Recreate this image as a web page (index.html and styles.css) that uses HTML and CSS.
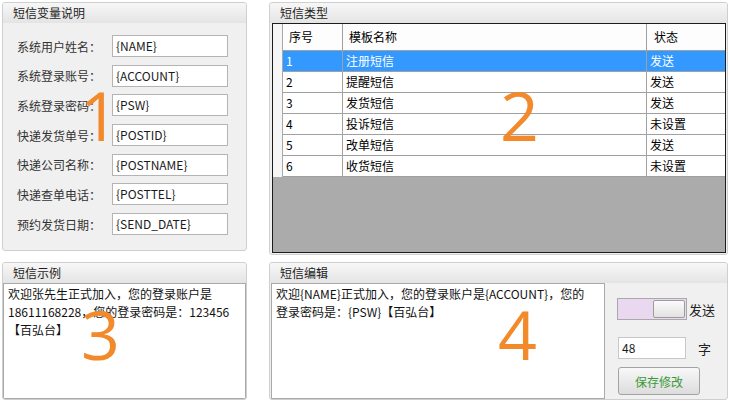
FILE: index.html
```html
<!DOCTYPE html>
<html lang="zh-CN">
<head>
<meta charset="utf-8">
<title>短信设置</title>
<link rel="stylesheet" href="styles.css">
</head>
<body>
<div class="page">
  <section class="panel vars">
    <header class="ph">短信变量说明</header>
    <div class="vars-body">
      <div class="vrow"><span class="vlabel">系统用户姓名：</span><span class="vinput">{NAME}</span></div>
      <div class="vrow"><span class="vlabel">系统登录账号：</span><span class="vinput">{ACCOUNT}</span></div>
      <div class="vrow"><span class="vlabel">系统登录密码：</span><span class="vinput">{PSW}</span></div>
      <div class="vrow"><span class="vlabel">快递发货单号：</span><span class="vinput">{POSTID}</span></div>
      <div class="vrow"><span class="vlabel">快递公司名称：</span><span class="vinput">{POSTNAME}</span></div>
      <div class="vrow"><span class="vlabel">快递查单电话：</span><span class="vinput">{POSTTEL}</span></div>
      <div class="vrow"><span class="vlabel">预约发货日期：</span><span class="vinput">{SEND_DATE}</span></div>
    </div>
  </section>

  <section class="panel types">
    <header class="ph">短信类型</header>
    <div class="grid">
      <div class="gr ghead"><span class="rh"></span><span class="gc">序号</span><span class="gc">模板名称</span><span class="gc">状态</span></div>
      <div class="gr sel"><span class="rh"></span><span class="gc">1</span><span class="gc">注册短信</span><span class="gc">发送</span></div>
      <div class="gr"><span class="rh"></span><span class="gc">2</span><span class="gc">提醒短信</span><span class="gc">发送</span></div>
      <div class="gr"><span class="rh"></span><span class="gc">3</span><span class="gc">发货短信</span><span class="gc">发送</span></div>
      <div class="gr"><span class="rh"></span><span class="gc">4</span><span class="gc">投诉短信</span><span class="gc">未设置</span></div>
      <div class="gr"><span class="rh"></span><span class="gc">5</span><span class="gc">改单短信</span><span class="gc">发送</span></div>
      <div class="gr"><span class="rh"></span><span class="gc">6</span><span class="gc">收货短信</span><span class="gc">未设置</span></div>
      <div class="gempty"></div>
    </div>
  </section>

  <section class="panel example">
    <header class="ph">短信示例</header>
    <div class="tbox ex-text">欢迎张先生正式加入，您的登录账户是<br>18611168228，您的登录密码是：123456<br>【百弘台】</div>
  </section>

  <section class="panel edit">
    <header class="ph">短信编辑</header>
    <div class="edit-body">
      <div class="tbox ed-text">欢迎{NAME}正式加入，您的登录账户是{ACCOUNT}，您的<br>登录密码是：{PSW}【百弘台】</div>
      <div class="side">
        <div class="srow"><span class="toggle"><span class="knob"></span></span><span class="slabel">发送</span></div>
        <div class="srow"><span class="count">48</span><span class="slabel unit">字</span></div>
        <button class="save" type="button">保存修改</button>
      </div>
    </div>
  </section>

  <span class="badge b1">1</span>
  <span class="badge b2">2</span>
  <span class="badge b3">3</span>
  <span class="badge b4">4</span>
</div>
</body>
</html>
```

FILE: styles.css
```css
* { box-sizing: border-box; }

html, body {
  margin: 0;
  padding: 0;
  background: #ffffff;
}

body {
  width: 730px;
  height: 402px;
  overflow: hidden;
  font-family: "Noto Sans CJK SC", "Noto Sans", sans-serif;
  font-size: 12px;
  color: #222;
}

.page {
  position: relative;
  display: grid;
  grid-template-columns: 245px 459px;
  grid-template-rows: 253px 138px;
  column-gap: 22px;
  row-gap: 7px;
  padding: 2px;
  align-items: start;
}

.panel {
  display: flex;
  flex-direction: column;
  border: 1px solid #cfcfcf;
  border-radius: 3px;
  background: #f0f0f0;
  overflow: hidden;
}

.ph {
  flex: none;
  height: 20px;
  line-height: 20px;
  padding-left: 10px;
  font-size: 12px;
  color: #1e1e1e;
  background: linear-gradient(#f7f7f7, #e4e4e4);
}

/* panel 1 */
.vars { height: 249px; }

.vars-body {
  display: flex;
  flex-direction: column;
  gap: 7.7px;
  padding: 12px 0 0 14px;
}

.vrow {
  display: flex;
  align-items: center;
  height: 22px;
}

.vlabel {
  width: 95px;
  color: #333;
  white-space: nowrap;
}

.vinput {
  width: 116px;
  height: 22px;
  line-height: 20px;
  padding-left: 3px;
  border: 1px solid #b4b4b4;
  background: #fff;
  color: #1a1a1a;
}

/* panel 2 */
.types { height: 253px; }

.grid {
  flex: 1;
  display: flex;
  flex-direction: column;
  margin: 0 1px 1px 2px;
  border: 1px solid #1c1c1c;
  background: #ababab;
  overflow: hidden;
}

.gr {
  flex: none;
  display: grid;
  grid-template-columns: 10px 60px 304px 78px;
  height: 21px;
  background: #fff;
  color: #000;
}

.gr .rh {
  background: #f6f6f6;
  border-right: 1px solid #a8a8a8;
}

.gc {
  padding-left: 3px;
  line-height: 20px;
  border-bottom: 1px solid #a0a0a0;
  border-right: 1px solid #a0a0a0;
  white-space: nowrap;
}

.gc:last-child { border-right: none; }

.ghead {
  height: 27px;
  background: #fdfdfd;
}

.ghead .gc {
  padding-left: 6px;
  line-height: 26px;
}

.ghead .gc:last-child { padding-left: 7px; }

.sel .gc {
  background: #3399ff;
  color: #fff;
}

.gempty { flex: 1; }

/* text boxes */
.tbox {
  border: 1px solid #a9a9a9;
  background: #fff;
  color: #111;
  line-height: 18px;
  padding: 1px 0 0 4px;
  white-space: nowrap;
}

.example { height: 138px; }

.ex-text {
  flex: 1;
  margin: 0;
}

.edit { height: 138px; }

.edit-body {
  flex: 1;
  display: flex;
}

.ed-text {
  width: 334px;
  margin: 0 0 0 1px;
}

.side {
  display: flex;
  flex-direction: column;
  align-items: flex-start;
  padding: 15px 0 0 12px;
}

.srow {
  display: flex;
  align-items: center;
  gap: 2px;
}

.srow + .srow { margin-top: 17px; }

.slabel {
  font-size: 13px;
  color: #222;
}

.slabel.unit { margin-left: 10px; }

.toggle {
  position: relative;
  display: block;
  width: 70px;
  height: 22px;
  border: 1px solid #a9a9a9;
  background: #ead8f0;
}

.knob {
  position: absolute;
  right: 1px;
  top: 1px;
  width: 32px;
  height: 18px;
  border: 1px solid #9c9c9c;
  border-radius: 2px;
  background: linear-gradient(#fbfbfb, #e2e2e2);
}

.count {
  display: block;
  width: 68px;
  height: 22px;
  line-height: 20px;
  padding-left: 3px;
  border: 1px solid #c8c8c8;
  background: #fff;
  color: #1a1a1a;
  margin-left: 1px;
}

.save {
  margin: 8px 0 0 1px;
  width: 82px;
  height: 28px;
  border: 1px solid #a3a3a3;
  border-radius: 3px;
  background: linear-gradient(#f8f8f8, #dcdcdc);
  font-family: "Noto Sans CJK SC", "Noto Sans", sans-serif;
  font-size: 12px;
  color: #3a9a3a;
  padding: 0;
}

/* annotation numbers */
.badge {
  position: absolute;
  font-family: "Open Sans", "Noto Sans", sans-serif;
  font-size: 68px;
  line-height: 68px;
  font-weight: 500;
  color: #f28a2c;
  pointer-events: none;
}

.b1 { left: 80px; top: 81px; }
.b2 { left: 500px; top: 81px; }
.b3 { left: 81px; top: 300px; }
.b4 { left: 498px; top: 300px; }
```
